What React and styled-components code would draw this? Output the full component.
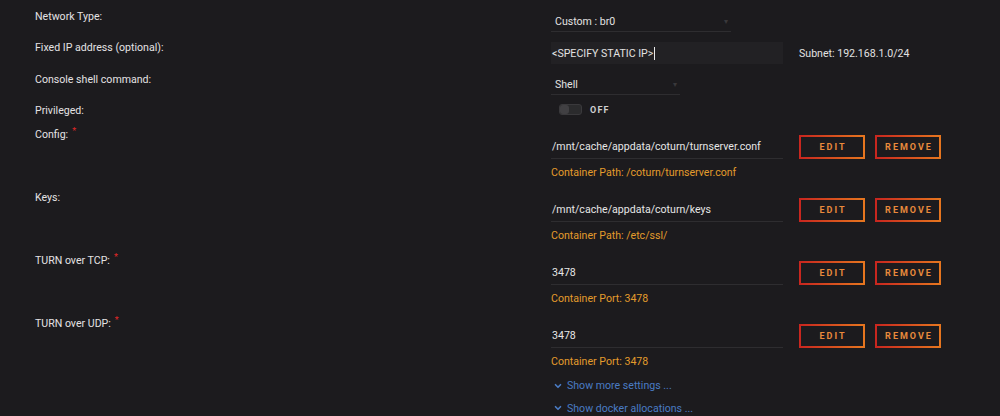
import React from 'react'
import styled, { createGlobalStyle } from 'styled-components'
import { ChevronDown } from 'lucide-react'

const GlobalStyle = createGlobalStyle`
  body {
    margin: 0;
    background: #1c1b1e;
    font-family: Roboto, 'Noto Sans', sans-serif;
    font-size: 10.6px;
    color: #e2e2e2;
  }
`

const Page = styled.div`
  width: 1000px;
  height: 416px;
  overflow: hidden;
  padding: 1px 0 0 35px;
  box-sizing: border-box;
`

const Row = styled.div`
  display: grid;
  grid-template-columns: 516px 1fr;
  height: ${(props) => props.height}px;
`

const Label = styled.div`
  padding-top: ${(props) => props.top || 0}px;
  line-height: 14px;
  color: #e4e2e4;
`

const Required = styled.span`
  color: #e22828;
  font-size: 9px;
  position: relative;
  top: -4px;
  margin-left: 4px;
`

const Field = styled.div`
  padding-top: ${(props) => props.top || 0}px;
  display: flex;
  flex-direction: column;
`

const Select = styled.div`
  width: ${(props) => props.width}px;
  height: 21px;
  box-sizing: border-box;
  border-bottom: 1px solid #2e2d30;
  padding-left: 4px;
  display: flex;
  align-items: center;
  justify-content: space-between;
  color: #e2e2e2;
  &::after {
    content: '▾';
    color: #39383b;
    font-size: 8px;
    margin-right: 3px;
  }
`

const Line = styled.div`
  display: flex;
  align-items: center;
  gap: 16px;
`

const TextBox = styled.div`
  width: 232px;
  height: 22px;
  background: #222124;
  display: flex;
  align-items: center;
  padding-left: 1px;
  box-sizing: border-box;
  color: #eaeaea;
`

const Caret = styled.span`
  display: inline-block;
  width: 1px;
  height: 13px;
  background: #e8e8e8;
  margin-left: 1px;
`

const Muted = styled.span`
  color: #e2e2e2;
`

const Toggle = styled.div`
  display: flex;
  align-items: center;
  gap: 8px;
  padding-left: 8px;
`

const Switch = styled.div`
  width: 21px;
  height: 9px;
  border-radius: 3px;
  background: #2b2b2d;
  border: 1px solid #3a393c;
  position: relative;
  &::before {
    content: '';
    position: absolute;
    left: 0;
    top: 0;
    width: 9px;
    height: 9px;
    border-radius: 3px;
    background: #414043;
  }
`

const ToggleText = styled.span`
  font-size: 9px;
  font-weight: 700;
  letter-spacing: 1.2px;
  color: #cfcfcf;
`

const PathInput = styled.div`
  width: 232px;
  height: 23px;
  box-sizing: border-box;
  border-bottom: 1px solid #2e2d30;
  padding-left: 1px;
  display: flex;
  align-items: center;
  color: #e6e6e6;
`

const Buttons = styled.div`
  display: flex;
  gap: 10px;
`

const Button = styled.button`
  width: 66px;
  height: 24px;
  box-sizing: border-box;
  background: transparent;
  border: 2px solid;
  border-image: linear-gradient(90deg, #c8261f 0, #e6761f) 1;
  font-family: Roboto, sans-serif;
  font-weight: 700;
  font-size: 9px;
  letter-spacing: 2px;
  text-transform: uppercase;
  color: #e98a3c;
  padding: 0 0 0 2px;
`

const Hint = styled.div`
  color: #e39b2c;
  margin-top: 7px;
  line-height: 14px;
`

const Subnet = styled.span`
  color: #e2e2e2;
`

const Toggler = styled.div`
  display: flex;
  align-items: center;
  gap: 4px;
  color: #4a7cc4;
  height: ${(props) => props.height}px;
  padding-left: 2px;
`

const paths = [
  { label: 'Config:', required: true, value: '/mnt/cache/appdata/coturn/turnserver.conf', hint: 'Container Path: /coturn/turnserver.conf' },
  { label: 'Keys:', required: false, value: '/mnt/cache/appdata/coturn/keys', hint: 'Container Path: /etc/ssl/' },
  { label: 'TURN over TCP:', required: true, value: '3478', hint: 'Container Port: 3478' },
  { label: 'TURN over UDP:', required: true, value: '3478', hint: 'Container Port: 3478' },
]

export default function App() {
  return (
    <>
      <GlobalStyle />
      <Page>
        <Row height={32}>
          <Label top={9}>Network Type:</Label>
          <Field top={10}>
            <Select width={180}>Custom : br0</Select>
          </Field>
        </Row>
        <Row height={32}>
          <Label top={8}>Fixed IP address (optional):</Label>
          <Field top={9}>
            <Line>
              <TextBox>
                <Muted>&lt;SPECIFY STATIC IP&gt;</Muted>
                <Caret />
              </TextBox>
              <Subnet>Subnet: 192.168.1.0/24</Subnet>
            </Line>
          </Field>
        </Row>
        <Row height={31}>
          <Label top={8}>Console shell command:</Label>
          <Field top={9}>
            <Select width={129}>Shell</Select>
          </Field>
        </Row>
        <Row height={29}>
          <Label top={8}>Privileged:</Label>
          <Field top={8}>
            <Toggle>
              <Switch />
              <ToggleText>OFF</ToggleText>
            </Toggle>
          </Field>
        </Row>
        {paths.map((p, i) => (
          <Row height={63} key={i}>
            <Label top={3}>
              {p.label}
              {p.required && <Required>*</Required>}
            </Label>
            <Field top={10}>
              <Line>
                <PathInput>{p.value}</PathInput>
                <Buttons>
                  <Button>Edit</Button>
                  <Button>Remove</Button>
                </Buttons>
              </Line>
              <Hint>{p.hint}</Hint>
            </Field>
          </Row>
        ))}
        <Row height={0}>
          <div />
          <div>
            <Toggler height={17}>
              <ChevronDown size={10} strokeWidth={4} />
              Show more settings ...
            </Toggler>
            <Toggler height={28}>
              <ChevronDown size={10} strokeWidth={4} />
              Show docker allocations ...
            </Toggler>
          </div>
        </Row>
      </Page>
    </>
  )
}
